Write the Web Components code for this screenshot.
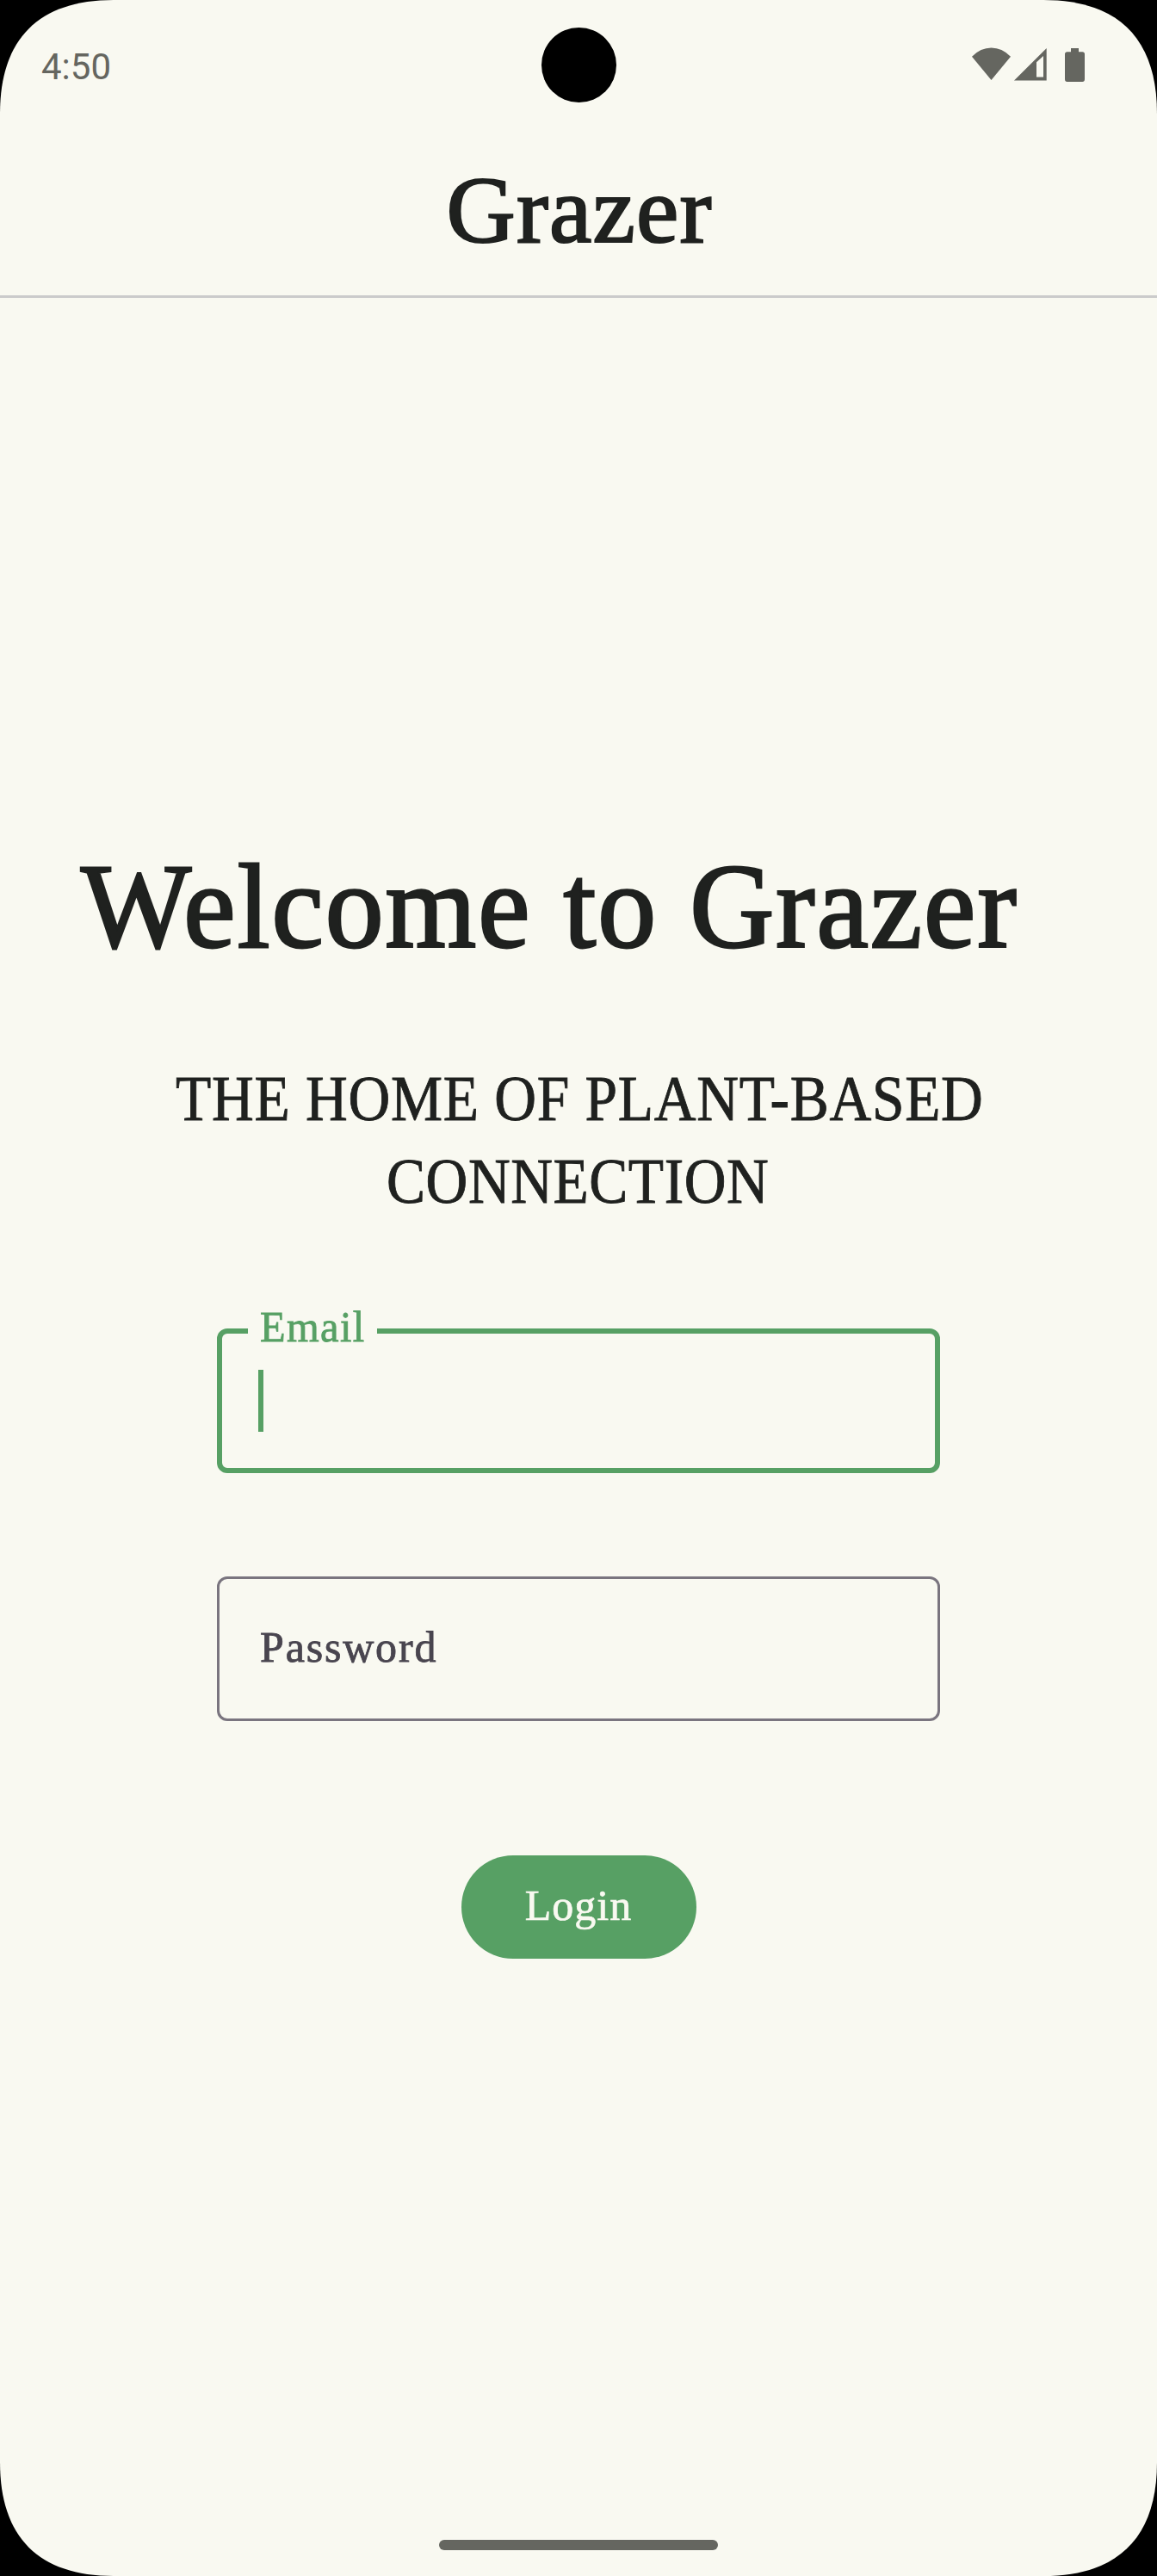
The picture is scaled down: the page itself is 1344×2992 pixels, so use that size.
<!DOCTYPE html>
<html lang="en">
<head>
<meta charset="utf-8">
<title>Grazer</title>
<style>
  body { margin: 0; background: #000; }
</style>
</head>
<body>
<login-screen></login-screen>
<script>
const attach = (el, html) => { el.attachShadow({ mode: 'open' }).innerHTML = html; };

// One line of serif text, tracked so that its ink spans exactly `ink` pixels.
class FitText extends HTMLElement {
  connectedCallback() {
    if (this.shadowRoot) return;
    const size = +this.getAttribute('size');
    const ink = +this.getAttribute('ink');
    const squeeze = +(this.getAttribute('squeeze') || 1);
    const gap = +(this.getAttribute('gap') || 0);
    const line = +this.getAttribute('line');
    const stroke = this.getAttribute('weight') || 0;
    const text = this.textContent;
    const ctx = document.createElement('canvas').getContext('2d');
    ctx.font = `${size}px "Liberation Serif"`;
    const m = ctx.measureText(text);
    const spaces = text.split(' ').length - 1;
    const natural = m.actualBoundingBoxLeft + m.actualBoundingBoxRight + gap * spaces;
    const tracking = (ink / squeeze - natural) / (text.length - 1);
    attach(this, `<style>
      :host { display: block; flex: none; width: ${ink}px; height: ${line}px; white-space: pre; }
      span { display: block; width: max-content; font: ${size}px/${line}px "Liberation Serif", serif;
        letter-spacing: ${tracking}px; word-spacing: ${gap}px; transform-origin: 0 0; transform: scaleX(${squeeze});
        margin-left: ${m.actualBoundingBoxLeft * squeeze}px; -webkit-text-stroke: ${stroke}px currentColor; }
    </style><span><slot></slot></span>`);
  }
}

class StatusBar extends HTMLElement {
  connectedCallback() {
    attach(this, `<style>
      :host { display: flex; box-sizing: border-box; height: 150px; padding: 0 84px 0 48px; color: #656660;
        justify-content: space-between; align-items: flex-start; }
      time { font: 42px/50px Roboto, sans-serif; margin-top: 53px; width: 132px; }
      i { width: 87px; height: 87px; border-radius: 50%; background: #000; margin: 31.5px 0 0 36px; }
      svg { display: block; margin-top: 50px; fill: currentColor; }
    </style>
    <time>4:50</time><i></i>
    <svg width="132" height="50" viewBox="1128 50 132 50">
      <path d="M1129 65.7Q1139 55.5 1151.5 55.5T1174 65.7L1151.5 93Z"/>
      <path fill-rule="evenodd" d="M1178 93.6L1215.7 56V93.6ZM1204 72.3V89.5H1212V65Z"/>
      <path d="M1244 56h9v4.3h4.3q2.7 0 2.7 2.7v29q0 3-2.7 3h-17.6q-2.7 0-2.7-3v-29q0-2.7 2.7-2.7h4.3z"/>
    </svg>`);
  }
}

class AppHeader extends HTMLElement {
  connectedCallback() {
    attach(this, `<style>
      :host { display: flex; box-sizing: border-box; height: 196px; justify-content: center;
        padding: 27px 0 0 4px; border-bottom: 3px solid #cbcbcb; color: #1f211f; }
    </style><slot></slot>`);
  }
}

class TextField extends HTMLElement {
  connectedCallback() {
    attach(this, `<style>
      :host { display: flex; position: relative; box-sizing: border-box; width: 840px; height: 168px;
        border: 3px solid #7a757f; border-radius: 12px; align-items: center; padding: 0 0 4px 48px; color: #49454f; }
      .caret { display: none; width: 6px; height: 72px; background: #57a064; }
      :host([focused]) { border: 6px solid #57a064; padding: 0 0 0 42px; color: #57a064; }
      :host([focused]) .caret { display: block; }
      :host([focused]) .label { position: absolute; left: 30px; top: -38px; width: 150px; box-sizing: border-box;
        padding-left: 15px; background: #f9f9f1; }
    </style><div class="label"><slot></slot></div><div class="caret"></div>`);
  }
}

class PillButton extends HTMLElement {
  connectedCallback() {
    attach(this, `<style>
      :host { display: flex; box-sizing: border-box; width: 273px; height: 120px; border-radius: 60px;
        background: #57a064; color: #f9f9f1; align-items: center; justify-content: center; padding-bottom: 4px; }
    </style><slot></slot>`);
  }
}

class LoginScreen extends HTMLElement {
  connectedCallback() {
    attach(this, `<style>
      :host { display: flex; flex-direction: column; width: 1344px; height: 2992px; background: #f9f9f1;
        clip-path: path("M0 132C0 45 45 0 132 0H1212C1299 0 1344 45 1344 132V2860C1344 2947 1299 2992 1212 2992H132C45 2992 0 2947 0 2860Z"); }
      main { display: flex; flex-direction: column; align-items: center; flex: 1; padding-top: 627px; color: #1f211f; }
      .title { align-self: flex-start; margin-left: 94px; }
      .tagline { display: flex; flex-direction: column; align-items: center; margin-top: 95px; }
      form { display: flex; flex-direction: column; align-items: center; margin-top: 123px; }
      .password { margin-top: 120px; }
      pill-button { margin-top: 156px; }
      .home { width: 324px; height: 12px; border-radius: 6px; background: #656660; margin: 0 auto 30px; }
    </style>
    <status-bar></status-bar>
    <app-header><fit-text size="111" ink="303" line="134" weight="2.2">Grazer</fit-text></app-header>
    <main>
      <fit-text class="title" size="140" ink="1086" line="160" squeeze="0.97" gap="1" weight="2.8">Welcome to Grazer</fit-text>
      <div class="tagline">
        <fit-text size="75" ink="935" line="96" squeeze="0.9" weight="0.9">THE HOME OF PLANT-BASED</fit-text>
        <fit-text size="75" ink="440" line="96" squeeze="0.9" weight="0.9">CONNECTION</fit-text>
      </div>
      <form>
        <text-field focused><fit-text size="50" ink="119.4" line="60" squeeze="0.97" weight="0.8">Email</fit-text></text-field>
        <text-field class="password"><fit-text size="50" ink="203.4" line="60" weight="0.8">Password</fit-text></text-field>
        <pill-button><fit-text size="50" ink="122.5" line="60" weight="0.7">Login</fit-text></pill-button>
      </form>
    </main>
    <div class="home"></div>`);
  }
}

customElements.define('fit-text', FitText);
customElements.define('status-bar', StatusBar);
customElements.define('app-header', AppHeader);
customElements.define('text-field', TextField);
customElements.define('pill-button', PillButton);
customElements.define('login-screen', LoginScreen);
</script>
</body>
</html>
